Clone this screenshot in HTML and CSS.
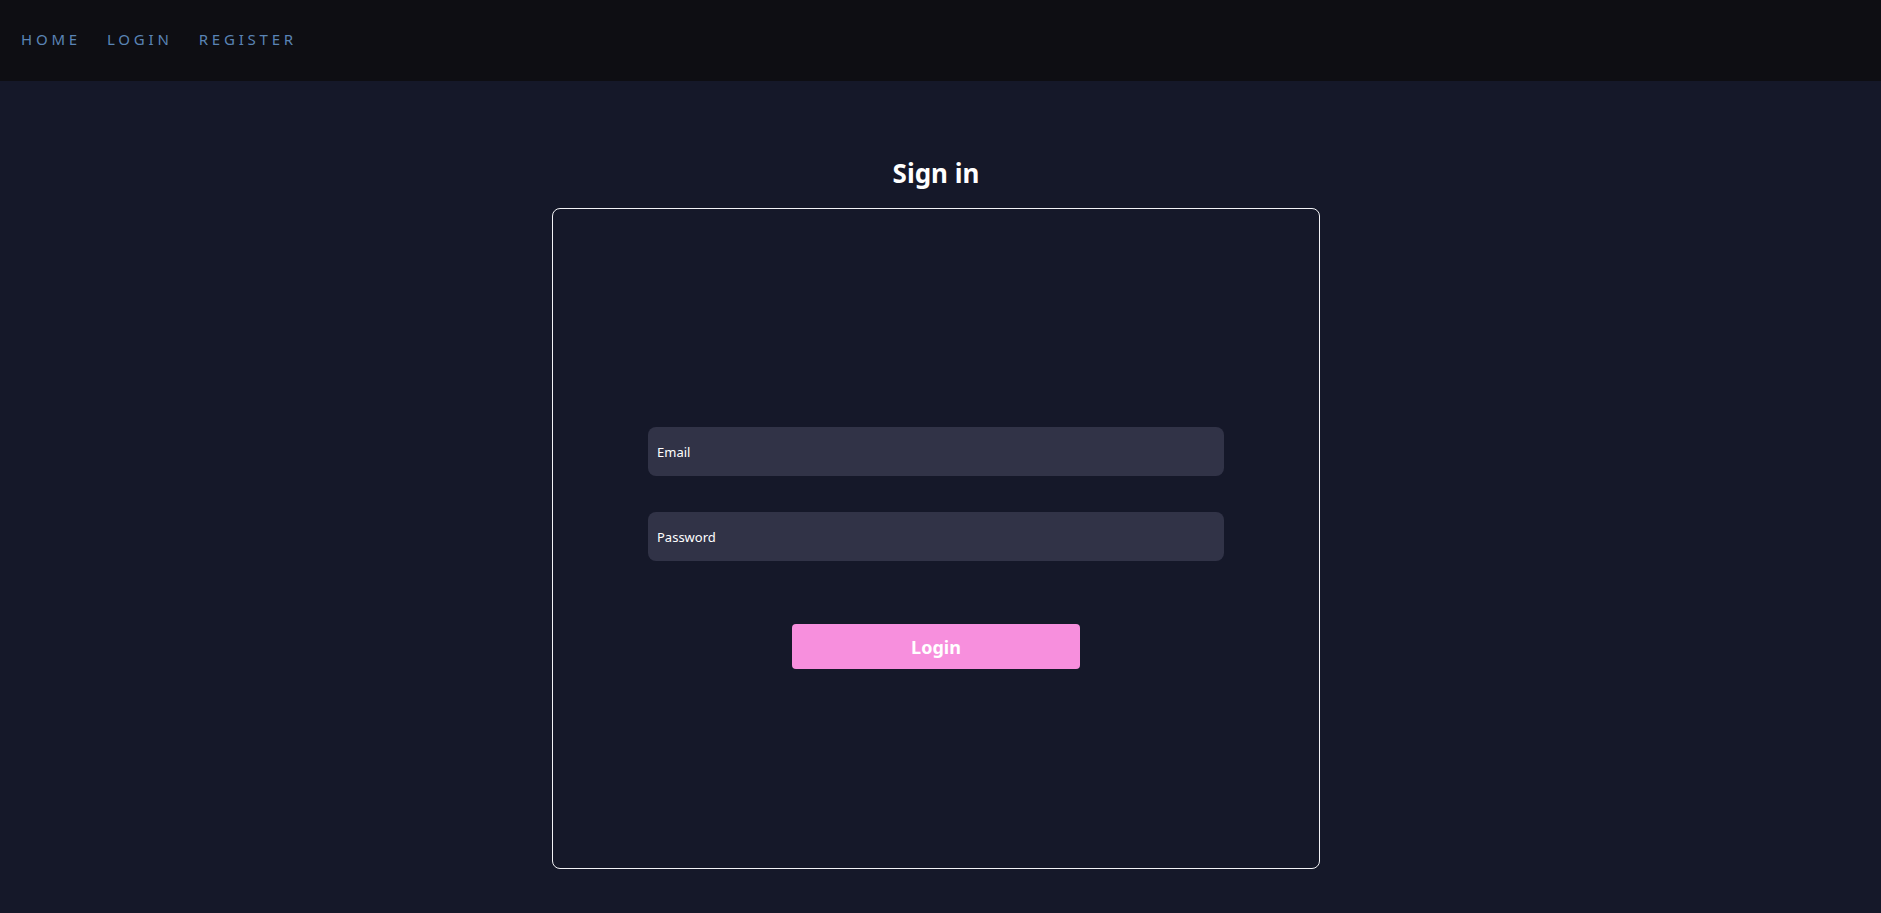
FILE: index.html
```html
<!DOCTYPE html>
<html lang="en">
<head>
<meta charset="utf-8">
<title>Sign in</title>
<link rel="stylesheet" href="styles.css">
</head>
<body>
<header class="topbar">
  <nav class="nav">
    <a class="nav-link" href="#">HOME</a>
    <a class="nav-link" href="#">LOGIN</a>
    <a class="nav-link" href="#">REGISTER</a>
  </nav>
</header>
<main class="page">
  <h1 class="title">Sign in</h1>
  <section class="card">
    <form class="form">
      <input class="field" type="email" placeholder="Email">
      <input class="field" type="password" placeholder="Password">
      <button class="btn" type="button">Login</button>
    </form>
  </section>
</main>
</body>
</html>
```
FILE: styles.css
```css
html, body {
  margin: 0;
  padding: 0;
  height: 100%;
}
body {
  background: #151829;
  font-family: "Noto Sans", "Open Sans", sans-serif;
  color: #ffffff;
  overflow: hidden;
}
.topbar {
  box-sizing: border-box;
  height: 81px;
  background: #0e0e13;
  display: flex;
  align-items: center;
  padding-left: 21px;
  padding-bottom: 2px;
}
.nav {
  display: flex;
  gap: 26px;
}
.nav-link {
  color: #5a84b5;
  text-decoration: none;
  font-size: 15px;
  letter-spacing: 3.8px;
  line-height: 1;
}
.page {
  display: flex;
  flex-direction: column;
  align-items: center;
  padding-right: 9px;
}
.title {
  margin: 0;
  margin-top: 74px;
  height: 53px;
  line-height: 36px;
  font-size: 26px;
  font-weight: 700;
}
.card {
  box-sizing: border-box;
  width: 768px;
  height: 661px;
  border: 1px solid #f2f2f6;
  border-radius: 8px;
  padding-top: 218px;
}
.form {
  display: flex;
  flex-direction: column;
  align-items: center;
}
.field {
  box-sizing: border-box;
  width: 576px;
  height: 49px;
  border: none;
  border-radius: 8px;
  background: #313347;
  color: #fff;
  padding: 0 9px;
  font-family: "Noto Sans", sans-serif;
  font-size: 13px;
  outline: none;
}
.field + .field {
  margin-top: 36px;
}
.field::placeholder {
  color: #ffffff;
  opacity: 1;
}
.btn {
  margin-top: 63px;
  width: 288px;
  height: 45px;
  border: none;
  border-radius: 4px;
  background: #f78fdd;
  color: #ffffff;
  font-family: "Noto Sans", sans-serif;
  font-size: 18px;
  font-weight: 700;
  cursor: pointer;
}
```
